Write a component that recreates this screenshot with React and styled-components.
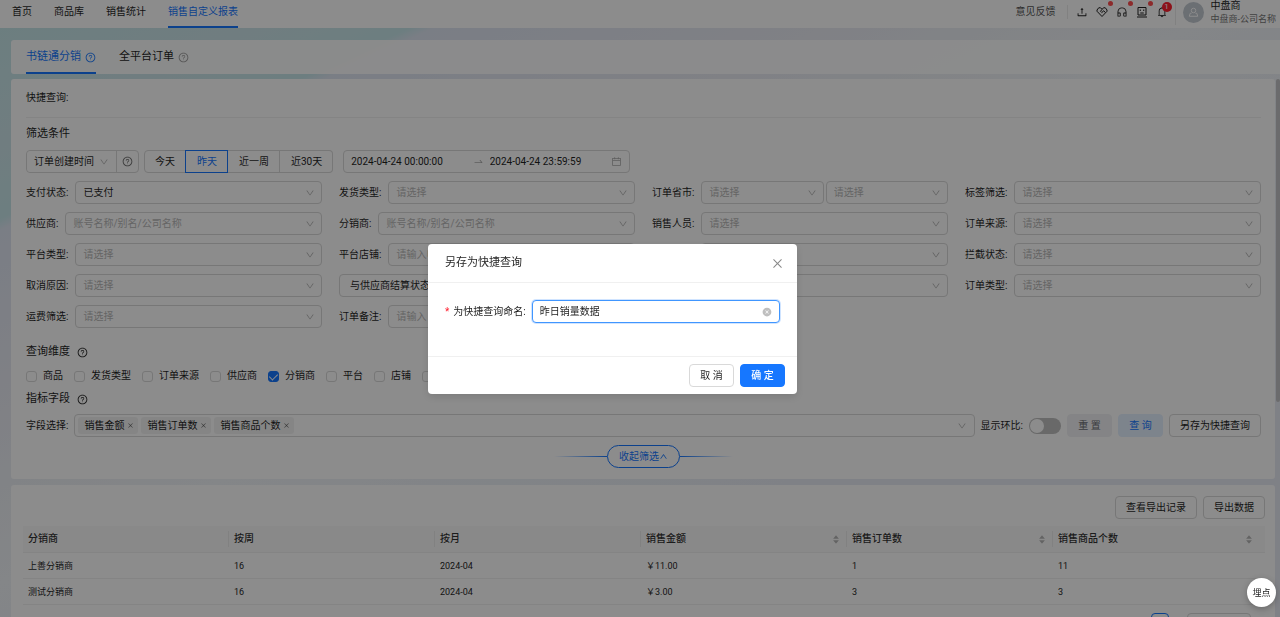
import React, { useState } from "react";
import styled, { createGlobalStyle, css } from "styled-components";
import {
  AiFillCaretDown,
  AiFillCaretUp,
  AiFillCloseCircle,
  AiOutlineBell,
  AiOutlineCalendar,
  AiOutlineClose,
  AiOutlineCustomerService,
  AiOutlineDown,
  AiOutlineQuestionCircle,
  AiOutlineSwapRight,
  AiOutlineUp,
  AiOutlineUpload,
} from "react-icons/ai";

const blue = "#1677ff";
const line = "#d9d9d9";
const placeholder = "#b8b8b8";

const GlobalStyle = createGlobalStyle`
  * {
    box-sizing: border-box;
  }
  body {
    margin: 0;
    overflow: hidden;
    color: #1f1f1f;
    font-family: Roboto, "Noto Sans CJK SC", sans-serif;
    font-size: 10px;
    line-height: 16px;
  }
  button, input, select {
    margin: 0;
    color: inherit;
    font: inherit;
  }
  button {
    cursor: pointer;
  }
  svg {
    display: block;
    flex: none;
  }
`;

const Page = styled.div`
  display: flex;
  flex-direction: column;
  height: 100vh;
  overflow: hidden;
  background: linear-gradient(
    155deg,
    #c3e6e8 0%,
    #cde4ea 12%,
    #c6e6ea 18%,
    #dfe5f2 19%,
    #e9ebf3 34%,
    #f0f4f7 48%,
    #e8ecf5 70%
  );
`;

/* ---------- top bar ---------- */

const TopBar = styled.header`
  display: flex;
  justify-content: space-between;
  height: 28px;
  padding: 0 4px 0 12px;
  background: #fff;
`;

const Menu = styled.nav`
  display: flex;
  gap: 22px;
`;

const MenuLink = styled.a`
  height: 28px;
  padding-top: 4px;
  border-bottom: 2px solid ${(p) => (p.$active ? blue : "transparent")};
  color: ${(p) => (p.$active ? blue : "inherit")};
  text-decoration: none;
`;

const Tools = styled.div`
  display: flex;
  align-items: center;
  height: 24px;
`;

const Feedback = styled.a`
  padding-right: 11px;
  border-right: 1px solid #ececec;
  color: #555;
  line-height: 14px;
  text-decoration: none;
`;

const IconRow = styled.div`
  display: flex;
  gap: 8px;
  margin: 0 7px 0 8px;
`;

const IconButton = styled.button`
  position: relative;
  display: flex;
  align-items: center;
  justify-content: center;
  width: 12px;
  height: 24px;
  padding: 0;
  border: 0;
  background: none;
  font-size: 12px;
`;

const Dot = styled.i`
  position: absolute;
  top: 1px;
  right: -5px;
  width: 5px;
  height: 5px;
  border-radius: 50%;
  background: #ff4d4f;
`;

const Count = styled.span`
  position: absolute;
  top: 2px;
  right: -4px;
  width: 10px;
  height: 10px;
  border-radius: 50%;
  background: #ff1f2f;
  color: #fff;
  font-size: 8px;
  line-height: 10px;
  text-align: center;
`;

const User = styled.div`
  display: flex;
  align-items: center;
  gap: 7px;
  padding-left: 7px;
  border-left: 1px solid #ececec;
`;

const Avatar = styled.span`
  display: flex;
  align-items: center;
  justify-content: center;
  width: 21px;
  height: 21px;
  border-radius: 50%;
  background: #c3cad2;
  color: #fff;
`;

const UserText = styled.div`
  line-height: 14px;
  white-space: nowrap;

  small {
    display: block;
    line-height: 12px;
    color: #777;
    font-size: 9px;
  }
`;

/* ---------- cards ---------- */

const TabCard = styled.div`
  display: flex;
  gap: 23px;
  height: 34px;
  margin: 12px 0 5px 11px;
  padding: 0 15px;
  border-radius: 3px 0 0 3px;
  background: rgba(255, 255, 255, 0.94);
`;

const Tab = styled.button`
  display: flex;
  align-items: center;
  gap: 4px;
  padding: 2px 0 0;
  border: 0;
  border-bottom: 2px solid ${(p) => (p.$active ? blue : "transparent")};
  background: none;
  color: ${(p) => (p.$active ? blue : "inherit")};
  font-size: 11px;

  svg {
    color: ${(p) => (p.$active ? blue : "#999")};
  }
`;

const Scroller = styled.div`
  display: flex;
  flex: 1;
  min-height: 0;
  padding-left: 11px;
`;

const Column = styled.main`
  flex: 1;
  min-width: 0;
`;

const ScrollBar = styled.div`
  width: 5px;
  padding-left: 1px;

  &::before {
    content: "";
    display: block;
    height: 60%;
    border-radius: 2px;
    background: #c4c4c6;
  }
`;

const FilterCard = styled.section`
  padding: 0 14px 11px 15px;
  border-radius: 3px;
  background: #fff;
`;

const QuickRow = styled.div`
  height: 39px;
  padding-top: 11px;
  border-bottom: 1px solid #f0f0f0;
`;

const Title = styled.h2`
  display: flex;
  align-items: center;
  gap: 7px;
  margin: ${(p) => p.$top}px 0 0;
  font-size: 11px;
  font-weight: 400;
  line-height: 16px;
`;

const box = css`
  height: 23px;
  border: 1px solid ${line};
  border-radius: 4px;
  background: #fff;
`;

const DateRow = styled.div`
  display: flex;
  margin: 8px 0;
`;

const TimeType = styled.div`
  ${box}
  display: flex;
  width: 113px;
  margin-right: 5px;

  button {
    display: flex;
    align-items: center;
    justify-content: center;
    width: 22px;
    padding: 0;
    border: 0;
    border-left: 1px solid ${line};
    background: none;
    color: #666;
    font-size: 11px;
  }
`;

const Presets = styled.div`
  display: flex;
  margin-right: 10px;
`;

const Preset = styled.button`
  height: 23px;
  padding: 0 10px 0 11px;
  border: 1px solid ${line};
  border-left-width: 0;
  background: #fff;

  &:first-child {
    padding-left: 10px;
    border-left-width: 1px;
    border-radius: 4px 0 0 4px;
  }
  &:last-child {
    border-radius: 0 4px 4px 0;
  }
  ${(p) =>
    p.$active &&
    css`
      border-color: ${blue};
      box-shadow: -1px 0 0 ${blue};
      color: ${blue};
    `}
`;

const DateRange = styled.div`
  ${box}
  display: flex;
  align-items: center;
  width: 287px;
  padding: 0 7px;
  color: #aaa;
  font-size: 11px;

  input {
    flex: 1;
    min-width: 0;
    padding: 0;
    border: 0;
    outline: 0;
    color: #1f1f1f;
    font-size: 10px;
  }
  svg:nth-of-type(1) {
    margin-right: 6px;
  }
`;

const Filters = styled.div`
  display: grid;
  grid-template-columns: repeat(4, minmax(0, 1fr));
  gap: 8px 17px;
`;

const Field = styled.div`
  display: flex;
  align-items: center;
  gap: 2px;

  > label {
    padding-right: 5px;
    white-space: nowrap;
  }
`;

const SelectBox = styled.div`
  position: relative;
  flex: 1;
  min-width: 0;

  select {
    ${box}
    border: ${(p) => (p.$bare ? 0 : `1px solid ${line}`)};
    ${(p) => p.$bare && "height: 21px;"}
    display: block;
    width: 100%;
    padding: 0 20px 0 ${(p) => (p.$wide ? 10 : 7)}px;
    appearance: none;
    color: ${(p) => (p.$filled ? "inherit" : placeholder)};
  }
  svg {
    position: absolute;
    top: 50%;
    right: 7px;
    margin-top: -5px;
    color: #b0b0b0;
    pointer-events: none;
  }
`;

const TextBox = styled.input`
  ${box}
  flex: 1;
  min-width: 0;
  padding: 0 7px;

  &::placeholder {
    color: ${placeholder};
  }
`;

const Checks = styled.div`
  display: flex;
  gap: 11px;
  margin: 8px 0 7px;
`;

const Check = styled.label`
  display: flex;
  align-items: center;
  gap: 6px;

  input {
    display: grid;
    place-items: center;
    width: 11px;
    height: 11px;
    border: 1px solid ${line};
    border-radius: 3px;
    appearance: none;
    background: #fff;
  }
  input:checked {
    border-color: ${blue};
    background: ${blue};
  }
  input:checked::after {
    content: "";
    width: 4px;
    height: 7px;
    margin-bottom: 2px;
    border: solid #fff;
    border-width: 0 1px 1px 0;
    transform: rotate(45deg);
  }
`;

const FieldRow = styled.div`
  display: flex;
  align-items: center;
  gap: 6px;
  margin: 7px 0 8px;
`;

const TagBox = styled.div`
  ${box}
  display: flex;
  flex: 1;
  align-items: center;
  gap: 3px;
  min-width: 0;
  padding: 0 7px 0 3px;
  color: #b0b0b0;

  > input {
    flex: 1;
    min-width: 0;
    border: 0;
    outline: 0;
  }
`;

const Tag = styled.span`
  display: flex;
  align-items: center;
  gap: 3px;
  height: 17px;
  padding: 0 4px 0 6px;
  border-radius: 3px;
  background: #f3f3f3;
  color: #1f1f1f;
  white-space: nowrap;

  button {
    padding: 0;
    border: 0;
    background: none;
    color: #666;
    font-size: 7px;
  }
`;

const Toggle = styled.input`
  width: 32px;
  height: 16px;
  padding: 1px;
  border-radius: 8px;
  appearance: none;
  background: #bfbfbf;

  &::before {
    content: "";
    display: block;
    width: 14px;
    height: 14px;
    border-radius: 50%;
    background: #fff;
  }
  &:checked {
    background: ${blue};
  }
  &:checked::before {
    margin-left: auto;
  }
`;

const kinds = {
  plain: css`
    background: #fff;
  `,
  muted: css`
    border-color: #f0f1f4;
    background: #f0f1f4;
    color: #6c6e74;
  `,
  soft: css`
    border-color: #e3f0ff;
    background: #e3f0ff;
    color: ${blue};
  `,
  primary: css`
    border-color: ${blue};
    background: ${blue};
    color: #fff;
    font-weight: 500;
  `,
};

const Button = styled.button`
  height: 23px;
  min-width: 45px;
  padding: 0 10px;
  border: 1px solid ${line};
  border-radius: 4px;
  white-space: nowrap;
  ${(p) => kinds[p.$kind || "plain"]}
`;

const Fold = styled.div`
  display: flex;
  align-items: center;
  justify-content: center;

  &::before,
  &::after {
    content: "";
    width: 53px;
    height: 1px;
    background: linear-gradient(to left, ${blue}, transparent);
  }
  &::after {
    background: linear-gradient(to right, ${blue}, transparent);
  }
  button {
    display: flex;
    align-items: center;
    height: 23px;
    padding: 0 11px;
    border: 1px solid ${blue};
    border-radius: 12px;
    background: #fff;
    color: ${blue};
  }
  svg {
    font-size: 9px;
  }
`;

/* ---------- result table ---------- */

const ResultCard = styled.section`
  height: 100%;
  margin-top: 6px;
  padding: 11px 10px 0 12px;
  border-radius: 3px;
  background: #fff;
`;

const Actions = styled.div`
  display: flex;
  justify-content: flex-end;
  gap: 6px;
  margin-bottom: 7px;
`;

const Table = styled.table`
  width: 100%;
  border-collapse: separate;
  border-spacing: 0;
  table-layout: fixed;

  th {
    width: 206px;
    height: 27px;
    padding: 0;
    border-bottom: 1px solid #f0f0f0;
    background: #fafafa;
    color: #333;
    font-weight: 500;
    text-align: left;
  }
  th:last-child {
    width: auto;
  }
  th > div {
    display: flex;
    align-items: center;
    justify-content: space-between;
    padding: 0 6px 0 5px;
    border-right: 1px solid #ececec;
  }
  th:last-child > div {
    padding-right: 12px;
    border-right: 0;
  }
  td {
    height: 26px;
    padding: 0 5px;
    border-bottom: 1px solid #f0f0f0;
    font-size: 9px;
  }
`;

const Sorter = styled.span`
  display: flex;
  flex-direction: column;
  color: #b5b5b5;
  font-size: 8px;

  svg + svg {
    margin-top: -3px;
  }
`;

const Pager = styled.div`
  display: flex;
  justify-content: flex-end;
  gap: 18px;
  margin: 8px 14px 0 0;

  button {
    width: 18px;
    height: 18px;
    padding: 0;
    border: 1px solid ${blue};
    border-radius: 4px;
    background: #fff;
    color: ${blue};
  }
  > div {
    flex: none;
    width: 64px;
  }
`;

/* ---------- modal ---------- */

const Mask = styled.div`
  position: fixed;
  inset: 0;
  z-index: 10;
  display: flex;
  align-items: center;
  justify-content: center;
  padding: 21px 55px 0 0;
  background: rgba(0, 0, 0, 0.45);
`;

const Dialog = styled.form`
  width: 369px;
  border-radius: 4px;
  background: #fff;
  box-shadow: 0 3px 9px rgba(0, 0, 0, 0.12);
`;

const DialogHead = styled.div`
  display: flex;
  align-items: center;
  justify-content: space-between;
  height: 39px;
  padding: 0 13px 0 17px;
  border-bottom: 1px solid #f0f0f0;

  h3 {
    margin: 0;
    font-size: 11px;
    font-weight: 400;
  }
  button {
    padding: 0;
    border: 0;
    background: none;
    color: #888;
    font-size: 13px;
  }
`;

const DialogBody = styled.div`
  display: flex;
  align-items: center;
  gap: 6px;
  padding: 17px 17px 33px;

  label::before {
    content: "*";
    margin-right: 4px;
    color: #ff1f2f;
  }
`;

const NameBox = styled.div`
  ${box}
  display: flex;
  flex: 1;
  align-items: center;
  padding: 0 7px;
  border-color: #4096ff;
  box-shadow: 0 0 0 1px rgba(22, 119, 255, 0.2);

  input {
    flex: 1;
    min-width: 0;
    padding: 0;
    border: 0;
    outline: 0;
  }
  button {
    padding: 0;
    border: 0;
    background: none;
    color: #bfbfbf;
  }
`;

const DialogFoot = styled.div`
  display: flex;
  justify-content: flex-end;
  gap: 6px;
  padding: 7px 12px;
  border-top: 1px solid #f0f0f0;
`;

const FloatButton = styled.button`
  position: fixed;
  right: 4px;
  bottom: 10px;
  z-index: 20;
  width: 29px;
  height: 29px;
  padding: 0;
  border: 0;
  border-radius: 50%;
  background: #fff;
  box-shadow: 0 2px 6px rgba(0, 0, 0, 0.25);
  font-size: 9px;
`;

const HandsIcon = () => (
  <svg width="12" height="12" viewBox="0 0 24 24" fill="none" stroke="currentColor" strokeWidth="2" strokeLinejoin="round">
    <path d="M11.500 6 9 3.500H5.500L2 8v2.500L12 21 22 10.500V8l-3.500-4.500H15L9 10.500l2.500 2.500 4-3.500 3 3.500" />
  </svg>
);

const FaceIcon = () => (
  <svg width="12" height="12" viewBox="0 0 24 24" fill="none" stroke="currentColor" strokeWidth="2">
    <path d="M4 3h16v15H4zM2 22h20M8.500 7v3M15.500 7v3M8.500 14h7" />
  </svg>
);

const PersonIcon = () => (
  <svg width="11" height="11" viewBox="0 0 22 22" fill="none" stroke="currentColor" strokeWidth="2">
    <circle cx="11" cy="7" r="4.500" />
    <path d="M7 12.500H4.500L2.500 18.500h17l-2-6H15" />
  </svg>
);

const Select = ({ id, text = "请选择", ...look }) => (
  <SelectBox $filled={look.filled} $bare={look.bare} $wide={look.wide}>
    <select id={id} aria-label={id ? undefined : text}>
      <option>{text}</option>
    </select>
    <AiOutlineDown size={10} />
  </SelectBox>
);

const account = "账号名称/别名/公司名称";

const filters = [
  { label: "支付状态", text: "已支付", filled: true },
  { label: "发货类型" },
  { label: "订单省市", pair: true },
  { label: "标签筛选" },
  { label: "供应商", text: account },
  { label: "分销商", text: account },
  { label: "销售人员" },
  { label: "订单来源" },
  { label: "平台类型" },
  { label: "平台店铺", input: "请输入电商店铺" },
  { label: "订单状态" },
  { label: "拦截状态" },
  { label: "取消原因" },
  { text: "与供应商结算状态" },
  { label: "售后状态" },
  { label: "订单类型" },
  { label: "运费筛选" },
  { label: "订单备注", input: "请输入" },
];

const dimensions = ["商品", "发货类型", "订单来源", "供应商", "分销商", "平台", "店铺", "销售人员"];
const metrics = ["销售金额", "销售订单数", "销售商品个数"];

const columns = [
  { name: "分销商" },
  { name: "按周" },
  { name: "按月" },
  { name: "销售金额", sort: true },
  { name: "销售订单数", sort: true },
  { name: "销售商品个数", sort: true },
];

const rows = [
  ["上善分销商", "16", "2024-04", "￥11.00", "1", "11"],
  ["测试分销商", "16", "2024-04", "￥3.00", "3", "3"],
];

const FilterField = ({ item, index }) => {
  const id = `filter-${index}`;

  if (!item.label) {
    return (
      <Field>
        <Select text={item.text} filled wide />
      </Field>
    );
  }

  return (
    <Field>
      <label htmlFor={id}>{item.label}:</label>
      {item.input ? (
        <TextBox id={id} placeholder={item.input} />
      ) : (
        <Select id={id} text={item.text} filled={item.filled} />
      )}
      {item.pair && <Select />}
    </Field>
  );
};

const SaveDialog = () => {
  const [name, setName] = useState("昨日销量数据");

  return (
    <Mask>
      <Dialog role="dialog" aria-labelledby="dialog-title" onSubmit={(e) => e.preventDefault()}>
        <DialogHead>
          <h3 id="dialog-title">另存为快捷查询</h3>
          <button type="button" aria-label="关闭">
            <AiOutlineClose />
          </button>
        </DialogHead>
        <DialogBody>
          <label htmlFor="query-name">为快捷查询命名:</label>
          <NameBox>
            <input id="query-name" value={name} onChange={(e) => setName(e.target.value)} />
            <button type="button" aria-label="清空" onClick={() => setName("")}>
              <AiFillCloseCircle />
            </button>
          </NameBox>
        </DialogBody>
        <DialogFoot>
          <Button type="button">取 消</Button>
          <Button $kind="primary">确 定</Button>
        </DialogFoot>
      </Dialog>
    </Mask>
  );
};

const App = () => {
  const [preset, setPreset] = useState("昨天");

  return (
    <>
      <GlobalStyle />
      <Page>
        <TopBar>
          <Menu>
            <MenuLink href="#home">首页</MenuLink>
            <MenuLink href="#goods">商品库</MenuLink>
            <MenuLink href="#stats">销售统计</MenuLink>
            <MenuLink href="#report" $active>
              销售自定义报表
            </MenuLink>
          </Menu>
          <Tools>
            <Feedback href="#feedback">意见反馈</Feedback>
            <IconRow>
              <IconButton aria-label="上传">
                <AiOutlineUpload />
              </IconButton>
              <IconButton aria-label="合作">
                <HandsIcon />
                <Dot />
              </IconButton>
              <IconButton aria-label="客服">
                <AiOutlineCustomerService />
                <Dot />
              </IconButton>
              <IconButton aria-label="助手">
                <FaceIcon />
                <Dot />
              </IconButton>
              <IconButton aria-label="通知">
                <AiOutlineBell />
                <Count>1</Count>
              </IconButton>
            </IconRow>
            <User>
              <Avatar>
                <PersonIcon />
              </Avatar>
              <UserText>
                中盘商
                <small>中盘商-公司名称</small>
              </UserText>
            </User>
          </Tools>
        </TopBar>

        <TabCard>
          <Tab $active>
            书链通分销
            <AiOutlineQuestionCircle />
          </Tab>
          <Tab>
            全平台订单
            <AiOutlineQuestionCircle />
          </Tab>
        </TabCard>

        <Scroller>
          <Column>
            <FilterCard>
              <QuickRow>快捷查询:</QuickRow>
              <Title $top={8}>筛选条件</Title>
              <DateRow>
                <TimeType>
                  <Select text="订单创建时间" filled bare />
                  <button aria-label="说明">
                    <AiOutlineQuestionCircle />
                  </button>
                </TimeType>
                <Presets>
                  {["今天", "昨天", "近一周", "近30天"].map((p) => (
                    <Preset key={p} $active={p === preset} onClick={() => setPreset(p)}>
                      {p}
                    </Preset>
                  ))}
                </Presets>
                <DateRange>
                  <input aria-label="开始时间" defaultValue="2024-04-24 00:00:00" />
                  <AiOutlineSwapRight />
                  <input aria-label="结束时间" defaultValue="2024-04-24 23:59:59" />
                  <AiOutlineCalendar />
                </DateRange>
              </DateRow>
              <Filters>
                {filters.map((item, i) => (
                  <FilterField key={i} item={item} index={i} />
                ))}
              </Filters>

              <Title $top={16}>
                查询维度
                <AiOutlineQuestionCircle />
              </Title>
              <Checks>
                {dimensions.map((d) => (
                  <Check key={d}>
                    <input type="checkbox" defaultChecked={d === "分销商"} />
                    {d}
                  </Check>
                ))}
              </Checks>

              <Title $top={0}>
                指标字段
                <AiOutlineQuestionCircle />
              </Title>
              <FieldRow>
                <label htmlFor="metrics">字段选择:</label>
                <TagBox>
                  {metrics.map((m) => (
                    <Tag key={m}>
                      {m}
                      <button aria-label={`移除${m}`}>
                        <AiOutlineClose />
                      </button>
                    </Tag>
                  ))}
                  <input id="metrics" />
                  <AiOutlineDown />
                </TagBox>
                <label htmlFor="compare">显示环比:</label>
                <Toggle id="compare" type="checkbox" role="switch" />
                <Button $kind="muted">重 置</Button>
                <Button $kind="soft">查 询</Button>
                <Button>另存为快捷查询</Button>
              </FieldRow>
              <Fold>
                <button>
                  收起筛选
                  <AiOutlineUp />
                </button>
              </Fold>
            </FilterCard>

            <ResultCard>
              <Actions>
                <Button>查看导出记录</Button>
                <Button>导出数据</Button>
              </Actions>
              <Table>
                <thead>
                  <tr>
                    {columns.map((c) => (
                      <th key={c.name}>
                        <div>
                          {c.name}
                          {c.sort && (
                            <Sorter>
                              <AiFillCaretUp />
                              <AiFillCaretDown />
                            </Sorter>
                          )}
                        </div>
                      </th>
                    ))}
                  </tr>
                </thead>
                <tbody>
                  {rows.map((r) => (
                    <tr key={r[0]}>
                      {r.map((cell, i) => (
                        <td key={i}>{cell}</td>
                      ))}
                    </tr>
                  ))}
                </tbody>
              </Table>
              <Pager>
                <button>1</button>
                <Select text="10 条/页" filled />
              </Pager>
            </ResultCard>
          </Column>
          <ScrollBar />
        </Scroller>
      </Page>
      <SaveDialog />
      <FloatButton>埋点</FloatButton>
    </>
  );
};

export default App;
